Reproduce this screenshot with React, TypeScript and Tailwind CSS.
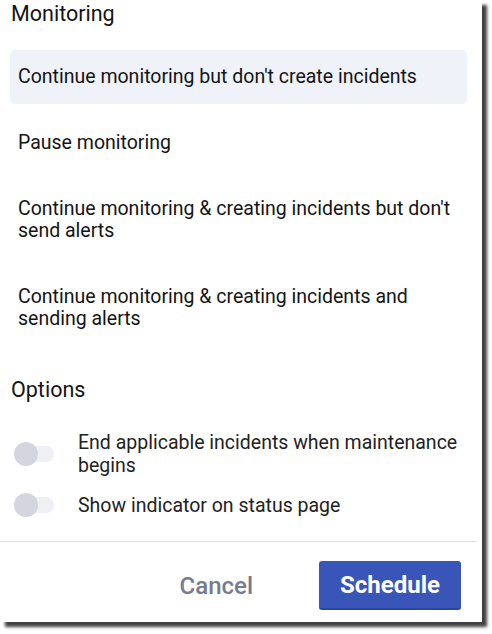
import React from "react";

const options = [
  { label: "Continue monitoring but don't create incidents", selected: true },
  { label: "Pause monitoring", selected: false },
  { label: "Continue monitoring & creating incidents but don't send alerts", selected: false },
  { label: "Continue monitoring & creating incidents and sending alerts", selected: false },
];

function Toggle() {
  return (
    <div className="relative w-[40px] h-[24px] shrink-0 flex items-center">
      <div className="absolute left-[2px] right-0 h-[16px] rounded-full bg-[#eef0f4]" />
      <div className="absolute left-0 w-[24px] h-[24px] rounded-full bg-[#d3d6df]" />
    </div>
  );
}

export default function App() {
  return (
    <div className="w-[492px] h-[634px] bg-white" style={{ fontFamily: "Roboto, 'Liberation Sans', sans-serif" }}>
      <div className="w-[482px] h-[622px] bg-white flex flex-col shadow-[5px_5px_3px_rgba(0,0,0,0.75)] text-[#141414]">
        <div className="px-[10px]">
          <h2 className="text-[21.5px] leading-[28px] pl-[1px] pt-0">Monitoring</h2>
          <div className="flex flex-col gap-[12px] mt-[22px] w-[457px]">
            {options.map((o) => (
              <div
                key={o.label}
                className={`px-[8px] py-[16px] rounded-[5px] text-[19.5px] leading-[22px] ${o.selected ? "bg-[#eff2f9]" : ""}`}
              >
                {o.label}
              </div>
            ))}
          </div>
          <h2 className="text-[21.5px] leading-[28px] pl-[1px] mt-[30px]">Options</h2>
          <div className="flex flex-col gap-[16px] mt-[27px] pl-[4px]">
            <div className="flex items-center gap-[24px]">
              <Toggle />
              <div className="text-[19.5px] leading-[23px] text-[#222] w-[390px]">
                End applicable incidents when maintenance begins
              </div>
            </div>
            <div className="flex items-center gap-[24px]">
              <Toggle />
              <div className="text-[19.5px] leading-[23px] text-[#222]">Show indicator on status page</div>
            </div>
          </div>
        </div>
        <div className="mt-[24px] border-t border-[#e2e2e6] w-[476px]" />
        <div className="flex items-center justify-end gap-[66px] pr-[21px] pt-[19px]">
          <button className="text-[24px] font-medium text-[#747c8e] leading-[28px]">Cancel</button>
          <button className="w-[142px] h-[49px] rounded-[3px] bg-[#3a55b8] border-b-2 border-[#2b46a8] text-white text-[24px] font-bold">
            Schedule
          </button>
        </div>
      </div>
    </div>
  );
}
